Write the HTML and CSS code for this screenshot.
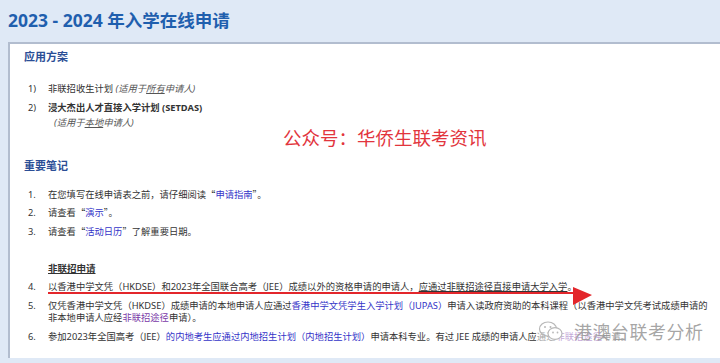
FILE: index.html
```html
<!DOCTYPE html>
<html lang="zh-CN">
<head>
	<meta charset="UTF-8">
	<title>2023 - 2024 年入学在线申请</title>
	<link rel="stylesheet" href="styles.css">
</head>
<body>
	<div class="page">
		<h1 class="title">2023 - 2024 年入学在线申请</h1>
		<div class="panel">
			<h2 class="head">应用方案</h2>
			<ol class="list first">
				<li><span class="num">1)</span><span class="txt">非联招收生计划 <i class="dim">(适用于<u>所有</u>申请人)</i></span></li>
				<li><span class="num">2)</span><span class="txt"><b>浸大杰出人才直接入学计划 (SETDAS)</b><i class="dim note">(适用于<u>本地</u>申请人)</i></span></li>
			</ol>

			<h2 class="head notes">重要笔记</h2>
			<ol class="list">
				<li><span class="num">1.</span><span class="txt">在您填写在线申请表之前，请仔细阅读<span class="q">“<a class="lnk">申请指南</a>”</span>。</span></li>
				<li><span class="num">2.</span><span class="txt">请查看<span class="q">“<a class="lnk">演示</a>”</span>。</span></li>
				<li><span class="num">3.</span><span class="txt">请查看<span class="q">“<a class="lnk">活动日历</a>”</span>了解重要日期。</span></li>
				<li class="sub"><span class="num"></span><span class="txt"><b><u>非联招申请</u></b></span></li>
				<li><span class="num">4.</span><span class="txt">以香港中学文凭（HKDSE）和2023年全国联合高考（JEE）成绩以外的资格申请的申请人，<u>应通过非联招途径直接申请大学入学</u>。</span></li>
				<li><span class="num">5.</span><span class="txt nowrap">仅凭香港中学文凭（HKDSE）成绩申请的本地申请人应通过<a class="lnk">香港中学文凭学生入学计划（JUPAS）</a>申请入读政府资助的本科课程（以香港中学文凭考试成绩申请的<br>非本地申请人应经<a class="lnk seen">非联招途径</a>申请）。</span></li>
				<li><span class="num">6.</span><span class="txt nowrap">参加2023年全国高考（JEE）<a class="lnk">的内地考生应通过内地招生计划（内地招生计划）</a>申请本科专业。有过 JEE 成绩的申请人应通过<a class="lnk seen">非联招途径</a>申请。</span></li>
			</ol>
		</div>
	</div>

	<div class="stamp">公众号：华侨生联考资讯</div>

	<svg class="arrow" width="600" height="22" viewBox="0 0 600 22">
		<line x1="48" y1="9" x2="578" y2="9" stroke="#e3262b" stroke-width="2"/>
		<polygon points="573,3 592,11 573,21" fill="#e3262b"/>
	</svg>

	<div class="mark">
		<svg width="26" height="22" viewBox="0 0 26 22">
			<ellipse cx="10" cy="9" rx="8.5" ry="7" fill="none" stroke="#b8b8b8" stroke-width="1.2"/>
			<ellipse cx="17" cy="13.5" rx="7" ry="5.8" fill="#fff" stroke="#b8b8b8" stroke-width="1.2"/>
			<circle cx="7" cy="7" r="1" fill="#b8b8b8"/>
			<circle cx="12.5" cy="7" r="1" fill="#b8b8b8"/>
			<circle cx="15" cy="12.5" r="0.9" fill="#b8b8b8"/>
			<circle cx="19.5" cy="12.5" r="0.9" fill="#b8b8b8"/>
		</svg>
		<span>港澳台联考分析</span>
	</div>
</body>
</html>
```

FILE: styles.css
```css
html, body {
	margin: 0;
	height: 100%;
	overflow: hidden;
}
body {
	background: #dfe9f6;
	font-family: "Noto Sans", "Noto Sans CJK SC", sans-serif;
	color: #333;
	position: relative;
}
.page {
	padding-left: 8px;
}
.title {
	margin: 0;
	padding: 8px 0 10px;
	font-size: 17.5px;
	line-height: 24px;
	font-weight: bold;
	color: #1f5fae;
}
.panel {
	background: #fff;
	border-top: 2px solid #b2bdcf;
	border-left: 2px solid #b2bdcf;
	padding: 5px 0 12px 14px;
}
.head {
	margin: 0;
	font-size: 11px;
	line-height: 16px;
	font-weight: bold;
	color: #2b4e96;
}
.head.notes {
	margin-top: 25px;
}
.list {
	list-style: none;
	margin: 12px 0 0;
	padding: 0 0 0 4px;
	font-size: 9.3px;
	line-height: 12.5px;
}
.list.first {
	margin-top: 15px;
}
.list li {
	display: flex;
	padding: 3px 0;
}
.list li.sub {
	margin-top: 18.5px;
	font-size: 9.5px;
}
.num {
	flex: 0 0 20px;
}
.nowrap {
	white-space: nowrap;
}
.q {
	font-family: "Noto Sans CJK SC", sans-serif;
	line-height: 1;
}
.dim {
	color: #555;
}
.note {
	display: block;
	margin: 3px 0 0 6px;
}
.lnk {
	color: #3434c8;
}
.lnk.seen {
	color: #7b3aa8;
}
.stamp {
	position: absolute;
	left: 283px;
	top: 124px;
	font-family: "Noto Sans CJK SC", sans-serif;
	font-size: 18.5px;
	line-height: 26px;
	color: #e2353d;
}
.arrow {
	position: absolute;
	left: 0;
	top: 284px;
}
.mark {
	position: absolute;
	left: 536px;
	top: 318px;
	display: flex;
	align-items: center;
	gap: 10px;
	padding: 0 6px 0 2px;
	background: rgba(255, 255, 255, 0.55);
	font-family: "Noto Sans CJK SC", sans-serif;
	font-size: 18px;
	line-height: 26px;
	letter-spacing: 0.5px;
	color: rgba(150, 150, 150, 0.85);
}
```
